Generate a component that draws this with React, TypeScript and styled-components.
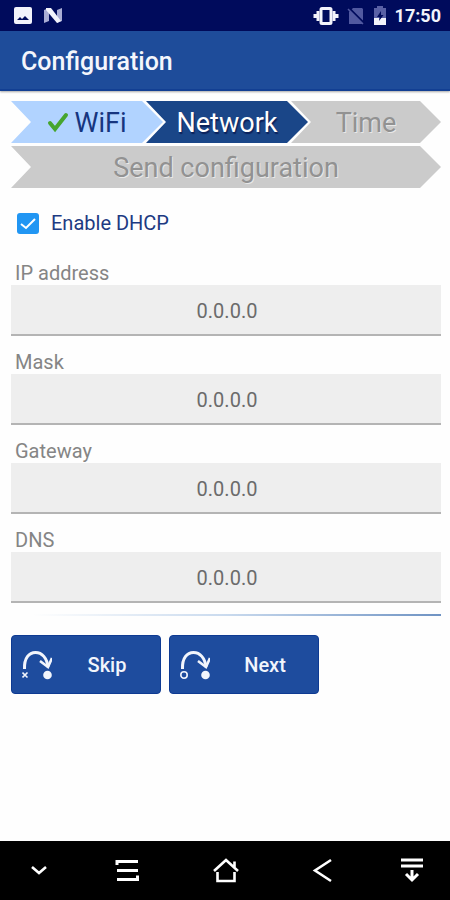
import React, { useState } from "react";
import styled, { createGlobalStyle, css } from "styled-components";

const GlobalStyle = createGlobalStyle`
  *, *::before, *::after { box-sizing: border-box; }
  body { margin: 0; background: #fff; font-family: Roboto, "Liberation Sans", sans-serif; }
  button, input { font: inherit; }
`;

const Screen = styled.div`
  min-height: 100vh;
  display: flex;
  flex-direction: column;
  background: #fefefe;
`;

const StatusBar = styled.div`
  height: 31px;
  padding: 0 9px 0 13px;
  display: flex;
  align-items: center;
  justify-content: space-between;
  background: #000b5c;
  color: #f2f3fb;
`;

const StatusGroup = styled.div<{ $gap: number }>`
  display: flex;
  align-items: center;
  gap: ${(p) => p.$gap}px;
`;

const Clock = styled.time`
  font-size: 18px;
  line-height: 24px;
  font-weight: 700;
`;

const AppBar = styled.header`
  height: 60px;
  padding: 4px 21px 0;
  display: flex;
  align-items: center;
  background: #1e4c9a;
  border-bottom: 2px solid #123f93;
  box-shadow: 0 1px 2px rgba(0, 0, 0, 0.35);
`;

const Title = styled.h1`
  margin: 0;
  font-size: 25px;
  line-height: 32px;
  font-weight: 500;
  color: #f4f6fc;
`;

const Content = styled.main`
  flex: 1;
  padding: 10px 9px 24px 11px;
`;

const Steps = styled.ol`
  margin: 0;
  padding: 0;
  list-style: none;
  display: grid;
  grid-template-columns: minmax(0, 152fr) minmax(0, 145fr) minmax(0, 133fr);
  row-gap: 3px;
`;

type StepState = "done" | "current" | "pending";

const stepColors = {
  done: css`
    background: #b1d3ff;
    color: #16357f;
  `,
  current: css`
    background: #1a4688;
    color: #fff;
    text-shadow: 1px 2px 1px rgba(0, 8, 60, 0.6);
  `,
  pending: css`
    background: #cbcbcb;
    color: #929292;
    text-shadow: 1px 1px 0 #e8e8e8;
  `,
};

const Step = styled.li<{ $state: StepState; $wide?: boolean; $overlap?: boolean }>`
  height: 42px;
  grid-column: ${(p) => (p.$wide ? "1 / -1" : "auto")};
  margin-left: ${(p) => (p.$overlap ? "-17px" : "0")};
  padding-top: 2px;
  display: flex;
  align-items: center;
  justify-content: center;
  gap: 5px;
  font-size: 27px;
  line-height: 32px;
  clip-path: polygon(0 0, calc(100% - 21px) 0, 100% 50%, calc(100% - 21px) 100%, 0 100%, 20px 50%);
  ${(p) => stepColors[p.$state]}
`;

const CheckRow = styled.label`
  margin-top: 19px;
  height: 32px;
  padding-left: 6px;
  display: flex;
  align-items: center;
  gap: 12px;
  font-size: 20px;
  line-height: 24px;
  color: #1d3a82;
`;

const CheckBox = styled.input`
  appearance: none;
  margin: 0;
  width: 22px;
  height: 21px;
  border-radius: 3px;
  border: 2px solid #757575;
  &:checked {
    border: 0;
    background: #2196f3
      url("data:image/svg+xml,%3Csvg xmlns='http://www.w3.org/2000/svg' viewBox='0 0 22 21'%3E%3Cpath d='M4 11l5 4 9-9' fill='none' stroke='white' stroke-width='2'/%3E%3C/svg%3E")
      center / 100% 100%;
  }
`;

const Fields = styled.div`
  margin-top: 22px;
  display: flex;
  flex-direction: column;
  gap: 14px;
`;

const Field = styled.div`
  display: flex;
  flex-direction: column;
`;

const FieldLabel = styled.label`
  padding-left: 4px;
  font-size: 20px;
  line-height: 24px;
  color: #858585;
`;

const FieldInput = styled.input`
  width: 100%;
  height: 51px;
  padding: 2px 0 0 2px;
  border: 0;
  border-bottom: 2px solid #b4b4b4;
  border-radius: 0;
  background: #eeeeee;
  color: #6b6b6b;
  font-size: 20px;
  text-align: center;
`;

const Divider = styled.hr`
  margin: 11px 0 19px;
  height: 2px;
  border: 0;
  background: linear-gradient(to right, #fefefe 5%, #c9daee 50%, #6f93c3 100%);
`;

const Actions = styled.div`
  display: flex;
  gap: 8px;
`;

const ActionButton = styled.button`
  flex: 0 1 150px;
  height: 59px;
  padding: 0 10px;
  display: flex;
  align-items: center;
  border: 1px solid #0e3a92;
  border-radius: 4px;
  background: #1e4c9e;
  color: #f2f5fc;
  font-size: 20px;
  line-height: 24px;
  font-weight: 500;
`;

const ActionText = styled.span`
  flex: 1;
  padding-left: 12px;
  text-align: center;
`;

const NavBar = styled.nav`
  height: 59px;
  display: grid;
  grid-template-columns: 78px 1fr 1fr 1fr 76px;
  background: #000;
`;

const NavButton = styled.button`
  padding: 0;
  border: 0;
  display: flex;
  align-items: center;
  justify-content: center;
  background: none;
  color: #fff;
`;

const PictureIcon = () => (
  <svg width="20" height="18" viewBox="0 0 20 18" aria-hidden="true">
    <rect x="1" y="0" width="18" height="17" rx="2" fill="currentColor" />
    <path d="M4 13l3-3 2 2 3-3 4 4z" fill="#000b5c" />
  </svg>
);

const NougatIcon = () => (
  <svg width="20" height="18" viewBox="0 0 20 18" aria-hidden="true">
    <path d="M1 3l5-2v13l-5 2zM14 3l5-2v13l-5 2z" fill="#a9add4" />
    <path d="M3 1h5l10 13-4 2L3 3z" fill="currentColor" />
  </svg>
);

const VibrateIcon = () => (
  <svg width="26" height="20" viewBox="0 0 26 20" aria-hidden="true">
    <rect x="8" y="2.500" width="10" height="15" rx="1" fill="none" stroke="currentColor" strokeWidth="3" />
    <path d="M5 5v10M21 5v10M2 8v4M24 8v4" stroke="currentColor" strokeWidth="3" />
  </svg>
);

const NoSimIcon = () => (
  <svg width="18" height="18" viewBox="0 0 18 18" aria-hidden="true">
    <path d="M6 1h9l1 1v15H2V5z" fill="#5159a0" />
    <path d="M1 0l17 17" stroke="#000b5c" strokeWidth="2" />
    <path d="M1 2l15 15" stroke="#5159a0" strokeWidth="1.500" />
  </svg>
);

const BatteryIcon = () => (
  <svg width="14" height="20" viewBox="0 0 14 20" aria-hidden="true">
    <path d="M4 0h6v2h3v17H1V2h3z" fill="#5960a5" />
    <path d="M1 12h12v7H1z" fill="currentColor" />
    <path d="M8 5l-4 6h2.500l-.5 4 4.500-6H8z" fill="#000b5c" />
  </svg>
);

const TickIcon = () => (
  <svg width="22" height="22" viewBox="0 0 22 22" aria-hidden="true">
    <path d="M3 11l5 6L19 3" fill="none" stroke="#46a52e" strokeWidth="4" strokeLinecap="round" />
  </svg>
);

const JumpIcon = ({ start }: { start: "cross" | "ring" }) => (
  <svg width="30" height="30" viewBox="0 0 30 30" aria-hidden="true" fill="none" stroke="currentColor">
    <path d="M2.500 19C2 8 7 2.500 13.500 2.500S25 8 26 17" strokeWidth="3" />
    <path d="M18 11l8 6 4-9" strokeWidth="2.600" />
    <circle cx="25.500" cy="25" r="4.300" fill="currentColor" stroke="none" />
    {start === "cross" ? (
      <path d="M.5 22.500l5 5M5.500 22.500l-5 5" strokeWidth="1.600" />
    ) : (
      <circle cx="4" cy="25" r="3.200" strokeWidth="1.600" />
    )}
  </svg>
);

const navIcons: { label: string; icon: React.ReactNode }[] = [
  { label: "Hide navigation bar", icon: <path d="M9 12l7 6 7-6" /> },
  { label: "Recent apps", icon: <path d="M6 10V6.500h21M6 15.500h21M6 24.500h20.500v-4" strokeWidth="3" /> },
  { label: "Home", icon: <path d="M4 16L16 5l12 11M24.500 12V6.500M7.500 17v9h17v-9" /> },
  { label: "Back", icon: <path d="M22 5L6 15.500 22 26" /> },
  { label: "Notifications", icon: <path d="M5 5h22M5 11h22M16 15v10M10 19l6 6 6-6" strokeWidth="3" /> },
];

const steps: { label: string; state: StepState; wide?: boolean; overlap?: boolean }[] = [
  { label: "WiFi", state: "done" },
  { label: "Network", state: "current", overlap: true },
  { label: "Time", state: "pending", overlap: true },
  { label: "Send configuration", state: "pending", wide: true },
];

const fields = [
  { id: "ip", label: "IP address" },
  { id: "mask", label: "Mask" },
  { id: "gateway", label: "Gateway" },
  { id: "dns", label: "DNS" },
];

export default function App() {
  const [dhcp, setDhcp] = useState(true);
  return (
    <>
      <GlobalStyle />
      <Screen>
        <StatusBar>
          <StatusGroup $gap={10}>
            <PictureIcon />
            <NougatIcon />
          </StatusGroup>
          <StatusGroup $gap={8}>
            <VibrateIcon />
            <NoSimIcon />
            <BatteryIcon />
            <Clock>17:50</Clock>
          </StatusGroup>
        </StatusBar>
        <AppBar>
          <Title>Configuration</Title>
        </AppBar>
        <Content>
          <Steps>
            {steps.map((s) => (
              <Step
                key={s.label}
                $state={s.state}
                $wide={s.wide}
                $overlap={s.overlap}
                aria-current={s.state === "current" ? "step" : undefined}
              >
                {s.state === "done" && <TickIcon />}
                {s.label}
              </Step>
            ))}
          </Steps>
          <CheckRow>
            <CheckBox type="checkbox" checked={dhcp} onChange={(e) => setDhcp(e.target.checked)} />
            Enable DHCP
          </CheckRow>
          <Fields>
            {fields.map((f) => (
              <Field key={f.id}>
                <FieldLabel htmlFor={f.id}>{f.label}</FieldLabel>
                <FieldInput id={f.id} type="text" defaultValue="0.0.0.0" readOnly={dhcp} />
              </Field>
            ))}
          </Fields>
          <Divider />
          <Actions>
            <ActionButton type="button">
              <JumpIcon start="cross" />
              <ActionText>Skip</ActionText>
            </ActionButton>
            <ActionButton type="button">
              <JumpIcon start="ring" />
              <ActionText>Next</ActionText>
            </ActionButton>
          </Actions>
        </Content>
        <NavBar>
          {navIcons.map((n) => (
            <NavButton key={n.label} type="button" aria-label={n.label}>
              <svg width="32" height="32" viewBox="0 0 32 32" fill="none" stroke="currentColor" strokeWidth="2.600" aria-hidden="true">
                {n.icon}
              </svg>
            </NavButton>
          ))}
        </NavBar>
      </Screen>
    </>
  );
}
